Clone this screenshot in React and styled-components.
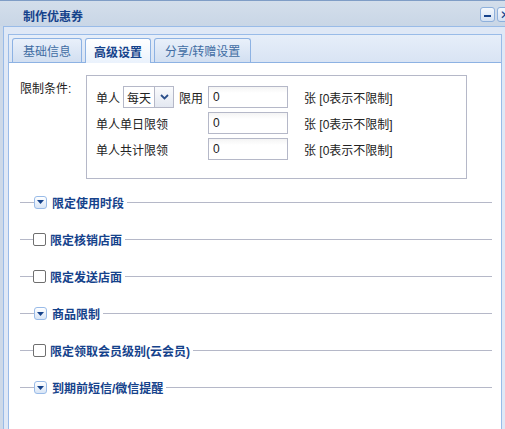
import React from "react";
import styled, { createGlobalStyle } from "styled-components";

const GlobalStyle = createGlobalStyle`
  html, body {
    margin: 0;
    padding: 0;
    overflow: hidden;
    background: #ffffff;
  }
  body {
    font-family: "Liberation Sans", "Noto Sans CJK SC", sans-serif;
    font-size: 12px;
  }
`;

const lineColor = "#b5b8c8";
const panelBorder = "#99bbe8";

const Win = styled.div`
  width: 507px;
  height: 429px;
  display: flex;
  flex-direction: column;
  background: #cdd9e8;
  border-top: 1px solid #7f9dc6;
  box-sizing: border-box;
`;

const Header = styled.div`
  height: 25px;
  display: flex;
  align-items: center;
  padding: 4px 0 0 23px;
  box-sizing: border-box;
  background: linear-gradient(#d3deeb, #c9d6e6);
`;

const Title = styled.div`
  font-weight: bold;
  color: #15428b;
  font-size: 12px;
`;

const Tools = styled.div`
  margin-left: auto;
  margin-right: -5px;
  display: flex;
  gap: 2px;
  align-self: flex-start;
  margin-top: 2px;
`;

const ToolBtn = styled.div`
  width: 15px;
  height: 15px;
  box-sizing: border-box;
  border: 1px solid #8eb0dc;
  border-radius: 3px;
  background: linear-gradient(#f4f8fd, #d3e1f3);
  display: flex;
  align-items: center;
  justify-content: center;
  color: #15428b;
  font-size: 12px;
  line-height: 1;
`;

const Dash = styled.span`
  width: 7px;
  height: 2px;
  margin-top: 3px;
  background: #15428b;
`;

const Body = styled.div`
  flex: 1;
  margin-left: 3px;
  border: 1px solid ${panelBorder};
  border-bottom: none;
  background: #dfe8f6;
  padding: 7px 4px 0 4px;
  display: flex;
  flex-direction: column;
`;

const TabPanel = styled.div`
  flex: 1;
  border: 1px solid ${panelBorder};
  border-bottom: none;
  display: flex;
  flex-direction: column;
  background: #fff;
`;

const TabStrip = styled.div`
  height: 27px;
  display: flex;
  align-items: flex-end;
  gap: 3px;
  padding-left: 3px;
  background: linear-gradient(#e6eef9, #d9e4f4);
  border-bottom: 1px solid #8db2e3;
`;

const Tab = styled.div`
  height: ${(p) => (p.$active ? "25px" : "24px")};
  box-sizing: border-box;
  padding: 0 ${(p) => (p.$active ? 8 : 10)}px;
  display: flex;
  align-items: center;
  border: 1px solid #8db2e3;
  border-bottom: none;
  border-radius: 3px 3px 0 0;
  margin-bottom: ${(p) => (p.$active ? "-1px" : "0")};
  background: ${(p) =>
    p.$active
      ? "linear-gradient(#ffffff, #eaf2fc)"
      : "linear-gradient(#e9f0fa, #d2dff1)"};
  color: ${(p) => (p.$active ? "#15428b" : "#416da3")};
  font-weight: ${(p) => (p.$active ? "bold" : "normal")};
  font-size: 12px;
`;

const Content = styled.div`
  flex: 1;
  padding: 12px 9px 0 11px;
  display: flex;
  flex-direction: column;
`;

const LimitRow = styled.div`
  display: flex;
`;

const FieldLabel = styled.div`
  width: 66px;
  padding-top: 4px;
  color: #222;
`;

const Box = styled.div`
  width: 381px;
  height: 104px;
  box-sizing: border-box;
  border: 1px solid ${lineColor};
  padding: 10px 0 0 9px;
  display: flex;
  flex-direction: column;
  gap: 4px;
`;

const Row = styled.div`
  display: flex;
  align-items: center;
  height: 22px;
  color: #222;
`;

const RowLabel = styled.div`
  width: 112px;
  display: flex;
  align-items: center;
  gap: 3px;
`;

const Select = styled.div`
  width: 51px;
  height: 22px;
  box-sizing: border-box;
  border: 1px solid ${lineColor};
  display: flex;
  align-items: stretch;
  margin-right: 2px;
`;

const SelectText = styled.div`
  flex: 1;
  display: flex;
  align-items: center;
  padding-left: 3px;
  background: #fff;
`;

const SelectBtn = styled.div`
  width: 18px;
  border-left: 1px solid ${lineColor};
  background: linear-gradient(#fafbfd, #e3e8f1);
  display: flex;
  align-items: center;
  justify-content: center;
`;

const Input = styled.div`
  width: 80px;
  height: 22px;
  box-sizing: border-box;
  border: 1px solid ${lineColor};
  background: linear-gradient(#f4f4f4, #ffffff 6px);
  padding-left: 4px;
  display: flex;
  align-items: center;
  color: #222;
`;

const Hint = styled.div`
  margin-left: 16px;
`;

const Sections = styled.div`
  margin-top: 15px;
  display: flex;
  flex-direction: column;
  gap: 21.2px;
`;

const SectionRow = styled.div`
  height: 16px;
  display: flex;
  align-items: center;
`;

const Rule = styled.div`
  height: 1px;
  background: ${lineColor};
  width: ${(p) => p.$w}px;
  flex: ${(p) => (p.$grow ? 1 : "none")};
`;

const Toggle = styled.div`
  width: 13px;
  height: 13px;
  box-sizing: border-box;
  border: 1px solid ${panelBorder};
  border-radius: 3px;
  background: linear-gradient(#ffffff, #d8e5f6);
  display: flex;
  align-items: center;
  justify-content: center;
`;

const Check = styled.div`
  width: 13px;
  height: 13px;
  box-sizing: border-box;
  border: 1px solid #6f6f6f;
  border-radius: 2px;
  background: #fff;
`;

const SectionTitle = styled.div`
  font-weight: bold;
  color: #15428b;
  margin: 0 3px 0 ${(p) => (p.$check ? 4 : 5)}px;
  white-space: nowrap;
`;

function DownArrow({ color = "#15428b", w = 7, h = 4 }) {
  return (
    <svg width={w} height={h} viewBox="0 0 7 4">
      <path d="M0 0 H7 L3.5 4 Z" fill={color} />
    </svg>
  );
}

function Chevron() {
  return (
    <svg width="9" height="6" viewBox="0 0 9 6">
      <path d="M1 1 L4.5 4.5 L8 1" stroke="#2b4f8a" strokeWidth="1.8" fill="none" />
    </svg>
  );
}

const sections = [
  { title: "限定使用时段", kind: "toggle" },
  { title: "限定核销店面", kind: "check" },
  { title: "限定发送店面", kind: "check" },
  { title: "商品限制", kind: "toggle" },
  { title: "限定领取会员级别(云会员)", kind: "check" },
  { title: "到期前短信/微信提醒", kind: "toggle" },
];

export default function App() {
  return (
    <>
      <GlobalStyle />
      <Win>
        <Header>
          <Title>制作优惠券</Title>
          <Tools>
            <ToolBtn>
              <Dash />
            </ToolBtn>
            <ToolBtn>✕</ToolBtn>
          </Tools>
        </Header>
        <Body>
          <TabPanel>
            <TabStrip>
              <Tab>基础信息</Tab>
              <Tab $active>高级设置</Tab>
              <Tab>分享/转赠设置</Tab>
            </TabStrip>
            <Content>
              <LimitRow>
                <FieldLabel>限制条件:</FieldLabel>
                <Box>
                  <Row>
                    <RowLabel>
                      单人
                      <Select>
                        <SelectText>每天</SelectText>
                        <SelectBtn>
                          <Chevron />
                        </SelectBtn>
                      </Select>
                      限用
                    </RowLabel>
                    <Input>0</Input>
                    <Hint>张 [0表示不限制]</Hint>
                  </Row>
                  <Row>
                    <RowLabel>单人单日限领</RowLabel>
                    <Input>0</Input>
                    <Hint>张 [0表示不限制]</Hint>
                  </Row>
                  <Row>
                    <RowLabel>单人共计限领</RowLabel>
                    <Input>0</Input>
                    <Hint>张 [0表示不限制]</Hint>
                  </Row>
                </Box>
              </LimitRow>
              <Sections>
                {sections.map((s) => (
                  <SectionRow key={s.title}>
                    <Rule $w={s.kind === "check" ? 13 : 14} />
                    {s.kind === "check" ? (
                      <Check />
                    ) : (
                      <Toggle>
                        <DownArrow />
                      </Toggle>
                    )}
                    <SectionTitle $check={s.kind === "check"}>{s.title}</SectionTitle>
                    <Rule $grow />
                  </SectionRow>
                ))}
              </Sections>
            </Content>
          </TabPanel>
        </Body>
      </Win>
    </>
  );
}
